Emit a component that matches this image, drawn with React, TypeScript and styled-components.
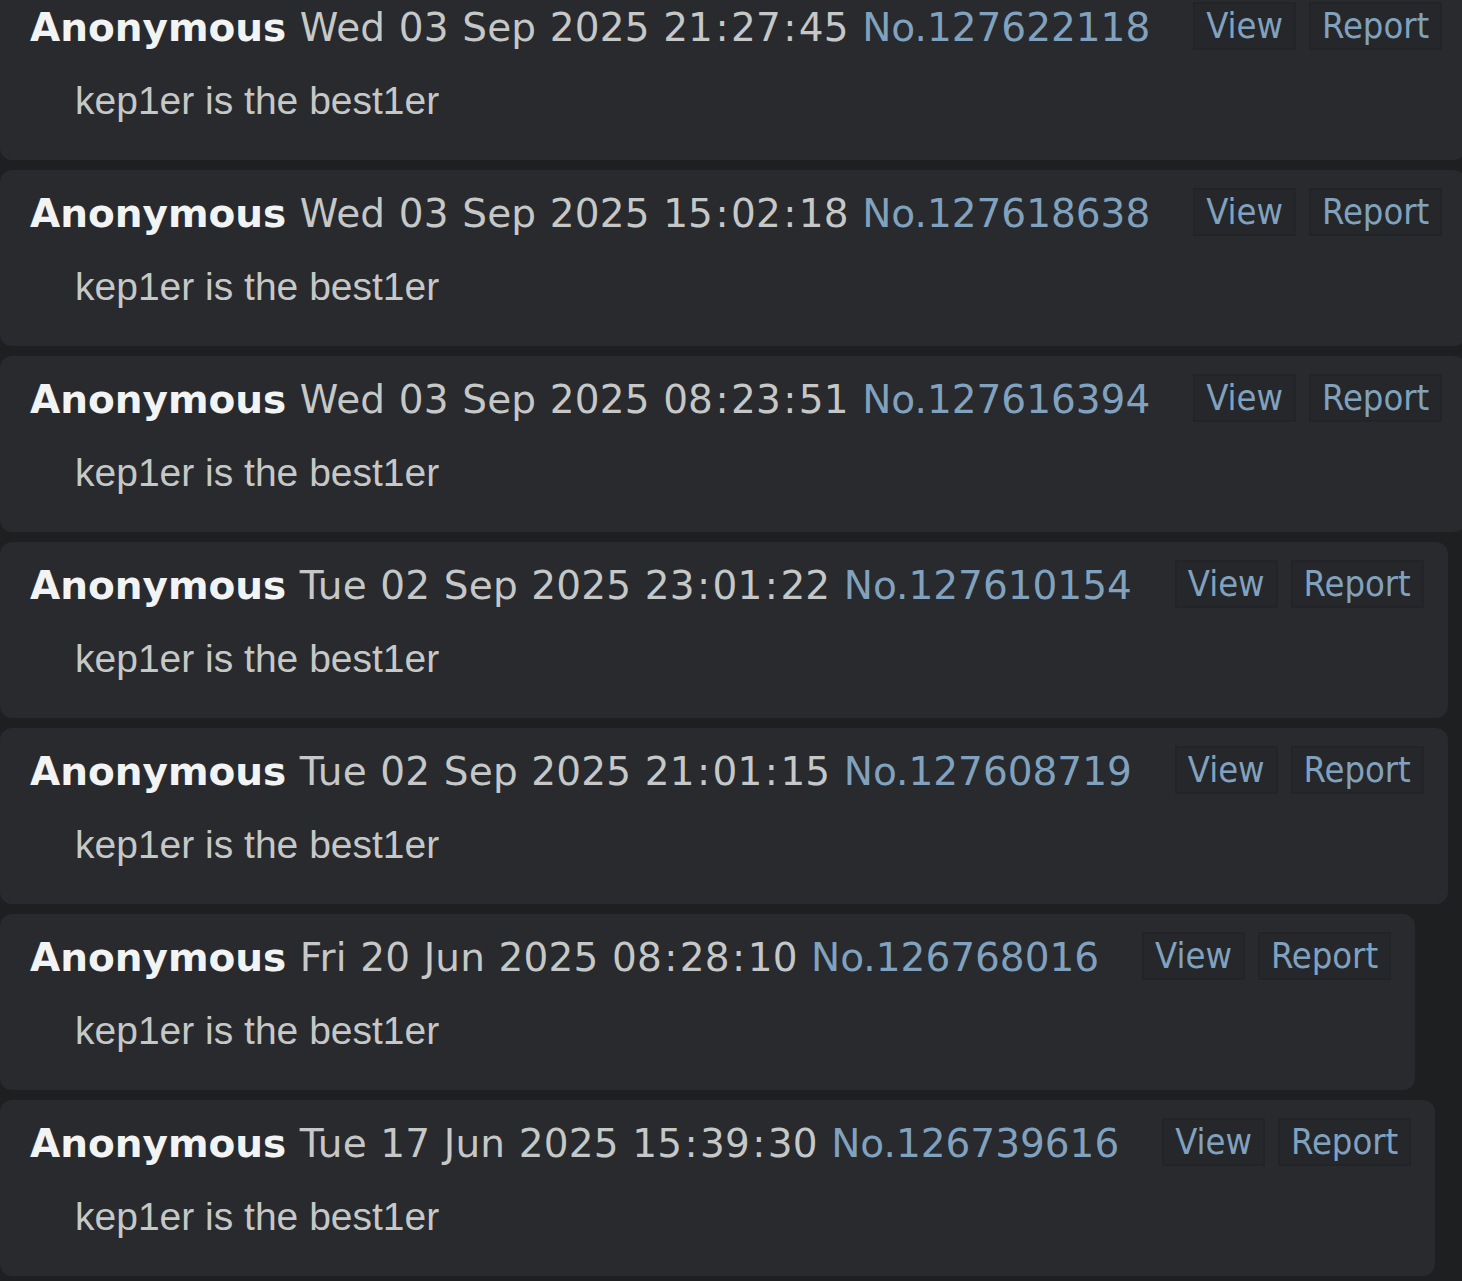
import React from 'react';
import styled, { createGlobalStyle } from 'styled-components';

const GlobalStyle = createGlobalStyle`
  html, body {
    margin: 0;
    padding: 0;
    background: #1d1f21;
  }
  body {
    overflow: hidden;
  }
`;

const List = styled.div`
  display: flex;
  flex-direction: column;
  align-items: flex-start;
  gap: 10px;
  margin-top: -16px;
`;

const Card = styled.div`
  display: flex;
  flex-direction: column;
  box-sizing: border-box;
  height: 176px;
  padding: 18px 24px 0 30px;
  background: #282a2e;
  border-radius: 12px;
`;

const Header = styled.div`
  display: flex;
  align-items: flex-start;
  height: 48px;
  font-family: 'DejaVu Sans', Verdana, sans-serif;
  font-size: 39px;
  line-height: 51px;
  white-space: nowrap;
  word-spacing: 1px;
`;

const Name = styled.span`
  font-weight: bold;
  color: #f2f3f3;
`;

const DateText = styled.span`
  color: #c5c8c6;
  letter-spacing: 0.15px;
`;

// Verdana's colon is a good deal wider than DejaVu's
const Colon = styled.span`
  padding: 0 2.3px;
`;

const PostNo = styled.a`
  color: #81a2be;
  text-decoration: none;
`;

const Buttons = styled.div`
  display: flex;
  gap: 13px;
  margin-left: 43px;
`;

const Button = styled.a`
  box-sizing: border-box;
  height: 48px;
  padding: 0 11px;
  border: 2px solid #222428;
  background: #25272b;
  color: #81a2be;
  font-family: 'DejaVu Sans Condensed', 'DejaVu Sans', Tahoma, sans-serif;
  font-stretch: condensed;
  font-size: 36px;
  line-height: 44px;
  text-decoration: none;
`;

const Message = styled.div`
  margin: 29px 0 0 45px;
  font-family: 'Liberation Sans', Arial, sans-serif;
  font-size: 39px;
  color: #c5c8c6;
`;

const posts = [
  { date: 'Wed 03 Sep 2025 21:27:45', no: '127622118' },
  { date: 'Wed 03 Sep 2025 15:02:18', no: '127618638' },
  { date: 'Wed 03 Sep 2025 08:23:51', no: '127616394' },
  { date: 'Tue 02 Sep 2025 23:01:22', no: '127610154' },
  { date: 'Tue 02 Sep 2025 21:01:15', no: '127608719' },
  { date: 'Fri 20 Jun 2025 08:28:10', no: '126768016' },
  { date: 'Tue 17 Jun 2025 15:39:30', no: '126739616' },
];

const renderDate = (date: string) =>
  date.split(':').map((part, i) => (
    <React.Fragment key={i}>
      {i > 0 && <Colon>:</Colon>}
      {part}
    </React.Fragment>
  ));

const App: React.FC = () => {
  return (
    <>
      <GlobalStyle />
      <List>
        {posts.map((post) => (
          <Card key={post.no}>
            <Header>
              <Name>Anonymous</Name>&nbsp;
              <DateText>{renderDate(post.date)}</DateText>&nbsp;
              <PostNo href="#">No.{post.no}</PostNo>
              <Buttons>
                <Button href="#">View</Button>
                <Button href="#">Report</Button>
              </Buttons>
            </Header>
            <Message>kep1er is the best1er</Message>
          </Card>
        ))}
      </List>
    </>
  );
};

export default App;
